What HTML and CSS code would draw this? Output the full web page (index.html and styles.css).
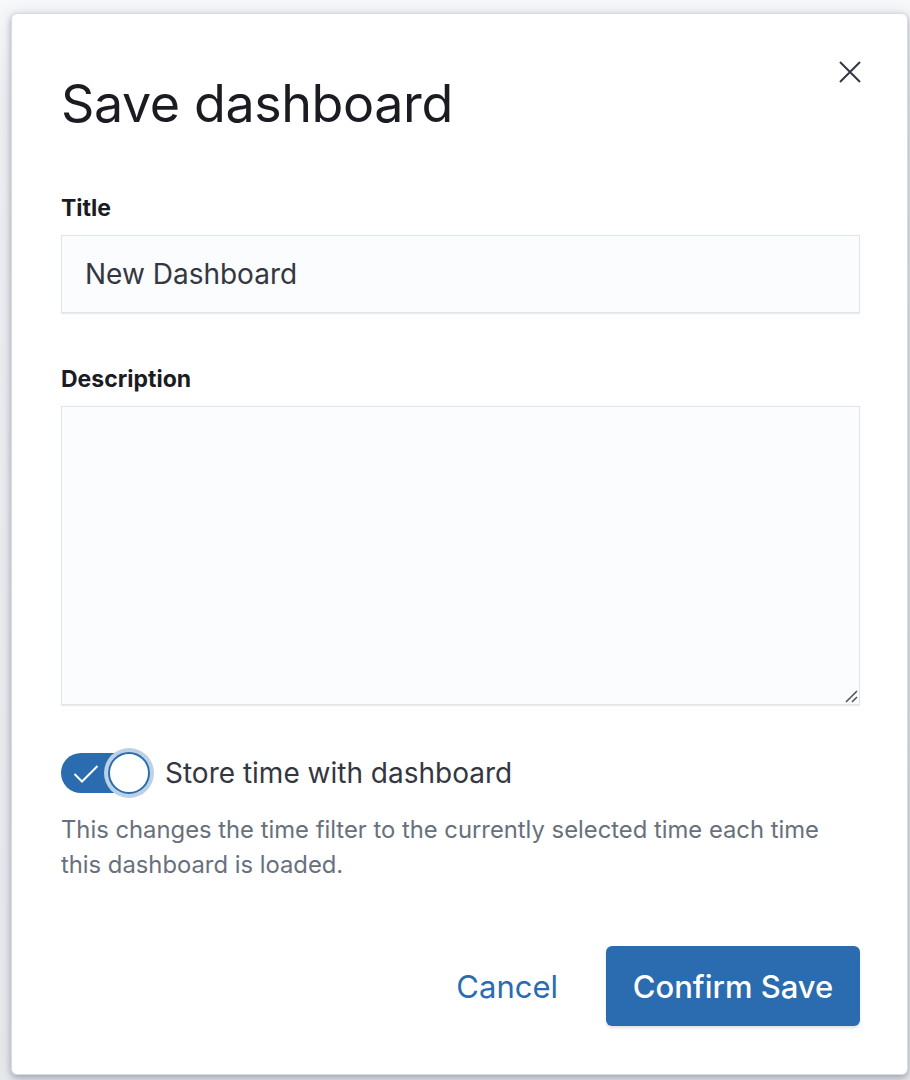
FILE: index.html
```html
<!DOCTYPE html>
<html>
<head>
<meta charset="utf-8">
<link rel="stylesheet" href="styles.css">
</head>
<body>
<div class="backdrop">
  <div class="modal">
    <button class="close" aria-label="Close">
      <svg width="22" height="22" viewBox="0 0 22 22"><path d="M1 1 L21 21 M21 1 L1 21" stroke="#343741" stroke-width="2" fill="none"/></svg>
    </button>
    <h1 class="heading">Save dashboard</h1>
    <div class="field">
      <label class="label">Title</label>
      <div class="input">New Dashboard</div>
    </div>
    <div class="field">
      <label class="label">Description</label>
      <div class="textarea">
        <svg class="grip" width="16" height="16" viewBox="0 0 16 16"><path d="M14 3 L3 14 M14 9 L9 14" stroke="#555" stroke-width="1.6" fill="none"/></svg>
      </div>
    </div>
    <div class="switch-row">
      <div class="switch">
        <svg class="check" width="26" height="20" viewBox="0 0 26 20"><path d="M1.5 10 L9 17.5 L24.5 2" stroke="#fff" stroke-width="2" fill="none"/></svg>
        <span class="knob"></span>
      </div>
      <span class="switch-label">Store time with dashboard</span>
    </div>
    <p class="help">This changes the time filter to the currently selected time each time this dashboard is loaded.</p>
    <div class="footer">
      <button class="btn-empty">Cancel</button>
      <button class="btn-primary">Confirm Save</button>
    </div>
  </div>
</div>
</body>
</html>
```
FILE: styles.css
```css
* { box-sizing: border-box; }
html, body { margin: 0; padding: 0; }
body {
  font-family: Inter, "Liberation Sans", sans-serif;
  background: #e9eaee;
  width: 910px;
  height: 1080px;
  overflow: hidden;
}
.backdrop {
  padding: 13px 0 0 11px;
  height: 1080px;
  background: linear-gradient(to bottom, #f7f8fa 0, #eceef1 100px, #e6e8ec 100%);
}
.modal {
  position: relative;
  width: 897px;
  height: 1062px;
  background: #fff;
  border-radius: 6px;
  border: 1px solid #d8dbe1;
  box-shadow: 0 3px 6px rgba(60,70,90,0.35), 0 0 14px rgba(60,70,90,0.12);
  padding: 70px 47px 0 49px;
}
.close {
  position: absolute;
  top: 47px;
  right: 46px;
  width: 22px;
  height: 22px;
  padding: 0;
  border: 0;
  background: none;
  display: flex;
}
.heading {
  margin: 0;
  font-size: 52px;
  font-weight: 400;
  line-height: 40px;
  color: #1a1c21;
  letter-spacing: -0.4px;
}
.field { margin-top: 70px; }
.field + .field { margin-top: 52px; }
.label {
  display: block;
  font-size: 23px;
  font-weight: 700;
  color: #1a1c21;
  line-height: 28px;
  margin-bottom: 13px;
}
.input {
  height: 78px;
  background: #fbfcfd;
  border: 1px solid #e1e4ea;
  box-shadow: 0 1px 1px rgba(0,0,0,0.08);
  font-size: 28px;
  color: #343741;
  padding: 0 23px;
  display: flex;
  align-items: center;
}
.textarea {
  position: relative;
  height: 299px;
  background: #fbfcfd;
  border: 1px solid #e1e4ea;
  box-shadow: 0 1px 1px rgba(0,0,0,0.08);
}
.grip {
  position: absolute;
  right: 0;
  bottom: 0;
}
.switch-row {
  display: flex;
  align-items: center;
  margin-top: 48px;
}
.switch {
  position: relative;
  width: 88px;
  height: 40px;
  border-radius: 20px;
  background: #2b6cb0;
  flex: none;
}
.check {
  position: absolute;
  left: 12px;
  top: 11px;
}
.knob {
  position: absolute;
  right: -1px;
  top: -1px;
  width: 42px;
  height: 42px;
  border-radius: 50%;
  background: #fff;
  border: 2px solid #2b6cb0;
  box-shadow: 0 0 0 4px #bcd0e6;
}
.switch-label {
  margin-left: 16px;
  font-size: 28px;
  color: #343741;
}
.help {
  margin: 19px 0 0 0;
  font-size: 23.8px;
  line-height: 35px;
  color: #69707d;
}
.footer {
  display: flex;
  justify-content: flex-end;
  align-items: center;
  margin-top: 64px;
  gap: 24px;
}
.btn-empty {
  font-family: inherit;
  border: 0;
  background: none;
  color: #2b6cb0;
  font-size: 31px;
  padding: 0 24px;
  height: 80px;
}
.btn-primary {
  font-family: inherit;
  border: 0;
  background: #2b6cb0;
  color: #fff;
  font-size: 31px;
  font-weight: 500;
  height: 80px;
  width: 254px;
  border-radius: 6px;
  box-shadow: 0 2px 3px rgba(0,0,0,0.12);
}
```
